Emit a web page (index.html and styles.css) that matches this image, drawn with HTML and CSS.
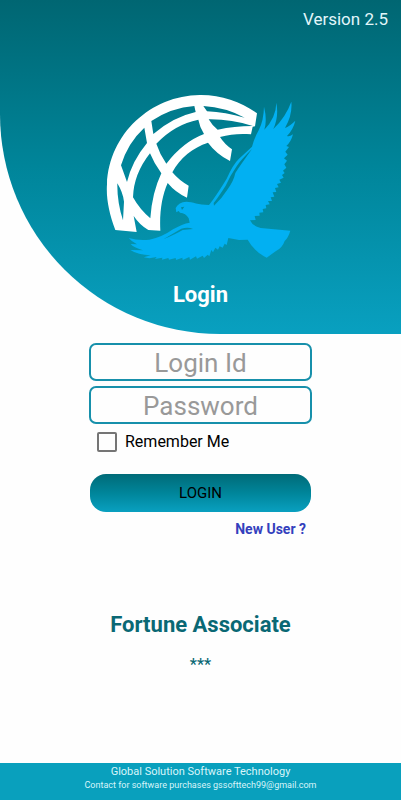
FILE: index.html
```html
<!DOCTYPE html>
<html lang="en">
<head>
<meta charset="utf-8">
<meta name="viewport" content="width=device-width, initial-scale=1">
<title>Login</title>
<link rel="stylesheet" href="styles.css">
</head>
<body>
<header class="hero">
  <p class="version">Version 2.5</p>
  <svg class="logo" viewBox="316 282 573 501" role="img" aria-label="Globe and eagle">
    <path fill="#fff" fill-rule="evenodd" d="M347 690C328 640 319 594 322 553C328 400 455 287 600 285C664 284 724 305 772 340L766 379L759 380L754 403C725 400 692 402 661 411Q674 432 697 448L691 483Q650 462 625 428C580 442 540 475 518 517Q540 543 567 557L562 593Q528 578 504 549C487 588 479 635 482 692L446 690Q420 675 402 648L411 696Z
    M455 363Q515 323 584 318L588 336Q520 351 461 402Z
    M434 383L442 429Q397 483 382 546Q372 518 364 496Q384 429 434 383Z
    M470 431Q525 373 596 359Q600 381 613 402Q550 426 500 491Q480 462 470 431Z
    M451 460Q463 490 485 520Q457 579 452 655Q420 628 400 592Q402 522 451 460Z
    M611 318Q678 322 735 353Q677 337 622 334Z
    M627 358Q694 357 759 378Q704 378 654 389Q637 376 627 358Z
    M353 550Q370 578 373 605L370 661Q352 606 353 550Z"/>
    <path fill="#02b0f2" fill-rule="evenodd" d="M530 637L528 624Q537 606 560 605C580 606 595 614 628 615Q652 584 681 536Q700 493 718 476L757 440Q764 414 777 391Q792 362 793 320Q803 360 794 389Q829 353 830 308Q838 351 821 387Q858 352 875 305Q879 344 856 384Q870 379 887 362Q881 388 862 408Q869 411 880 403Q874 426 860 438L868 441L857 455L864 464L853 475L862 482L854 493L860 503L850 512L855 519L847 525L852 533L839 539L844 548L832 552L837 562L826 564L830 576L819 577L824 590L813 592L817 603L805 603L810 613L798 615L800 625L789 627L791 637L779 638L780 647L765 648L768 660L751 661Q758 678 783 684L872 692Q866 713 855 723Q848 744 828 754L801 773Q763 754 744 719L718 720L686 714L681 735L675 731L669 743L660 739L655 749L647 743L640 757L635 750L629 769L624 764L613 774L609 767L592 776L589 769L571 779L569 771L549 780L548 773L529 780L528 774L508 779L506 774L487 779L488 773L466 777L471 771L449 775L432 772L453 766Q415 765 392 750L430 751Q401 742 393 732L412 733Q396 725 387 714Q417 723 449 719Q485 713 520 688Q548 671 570 668L567 655Q558 639 541 638L537 633ZM643 617Q666 596 685 566Q702 543 707 519Q720 498 757 447Q723 480 710 500Q693 524 678 557Q657 590 642 609ZM491 718Q527 703 549 690L580 687Q565 680 545 686ZM544 622L547 630L554 620Z"/>
  </svg>
  <h1 class="title">Login</h1>
</header>
<main class="main">
  <form class="form">
    <input class="field" type="text" placeholder="Login Id" aria-label="Login Id">
    <input class="field" type="password" placeholder="Password" aria-label="Password">
    <label class="remember"><input class="box" type="checkbox">Remember Me</label>
    <button class="submit" type="button">LOGIN</button>
    <a class="new-user" href="#">New User ?</a>
  </form>
  <h2 class="company">Fortune Associate</h2>
  <p class="stars">***</p>
</main>
<footer class="footer">
  <p class="vendor">Global Solution Software Technology</p>
  <p class="contact">Contact for software purchases gssofttech99@gmail.com</p>
</footer>
</body>
</html>
```

FILE: styles.css
```css
* { box-sizing: border-box; }

body {
  margin: 0;
  min-height: 100vh;
  display: flex;
  flex-direction: column;
  background: #fefefe;
  color: #000;
  font-family: Roboto, "Liberation Sans", sans-serif;
  font-size: 16px;
}

h1, h2, p { margin: 0; }

.hero {
  display: flex;
  flex-direction: column;
  align-items: center;
  padding: 8px 13px 23px;
  border-bottom-left-radius: 220px;
  background: linear-gradient(#006672, #00859a 50%, #09a0c0);
  color: #fff;
}

.version {
  align-self: flex-end;
  font-size: 17px;
  line-height: 22px;
  color: #e2f6fa;
}

.logo {
  width: 191px;
  height: 167px;
  margin: 64px 0 18px;
}

.title {
  font-size: 22px;
  line-height: 32px;
  font-weight: 700;
}

.main {
  flex: 1;
  display: flex;
  flex-direction: column;
  align-items: center;
  padding-top: 9px;
}

.form {
  width: 55%;
  min-width: 223px;
  display: flex;
  flex-direction: column;
}

.field {
  width: 100%;
  height: 38px;
  margin-bottom: 5px;
  padding: 2px 8px 0;
  border: 2px solid #1790ab;
  border-radius: 7px;
  background: #fefefe;
  font: 26px Roboto, "Liberation Sans", sans-serif;
  text-align: center;
}

.field::placeholder { color: #999; }

.remember {
  display: flex;
  align-items: center;
  gap: 8px;
  padding: 3px 8px;
  line-height: 20px;
}

.box {
  appearance: none;
  width: 20px;
  height: 20px;
  margin: 0;
  border: 2px solid #757575;
  border-radius: 2px;
}

.box:checked { background: #1790ab; }

.submit {
  height: 38px;
  margin: 19px 1px 7px;
  padding: 0;
  border: 0;
  border-radius: 16px;
  background: linear-gradient(#006b78, #00859a 50%, #09a0c0);
  color: #000;
  font: 400 15px Roboto, "Liberation Sans", sans-serif;
}

.new-user {
  align-self: flex-end;
  margin-right: 6px;
  color: #3340bd;
  font-size: 14px;
  line-height: 20px;
  font-weight: 700;
  text-decoration: none;
}

.company {
  margin-top: 70px;
  color: #0a6874;
  font-size: 22px;
  line-height: 32px;
  font-weight: 700;
}

.stars {
  margin-top: 14px;
  color: #0a6874;
  line-height: 20px;
  font-weight: 500;
}

.footer {
  padding: 1px 8px 8px;
  background: #09a0bd;
  color: #d8f5fa;
  text-align: center;
}

.vendor {
  font-size: 11px;
  line-height: 15px;
}

.contact {
  font-size: 9px;
  line-height: 13px;
}
```
